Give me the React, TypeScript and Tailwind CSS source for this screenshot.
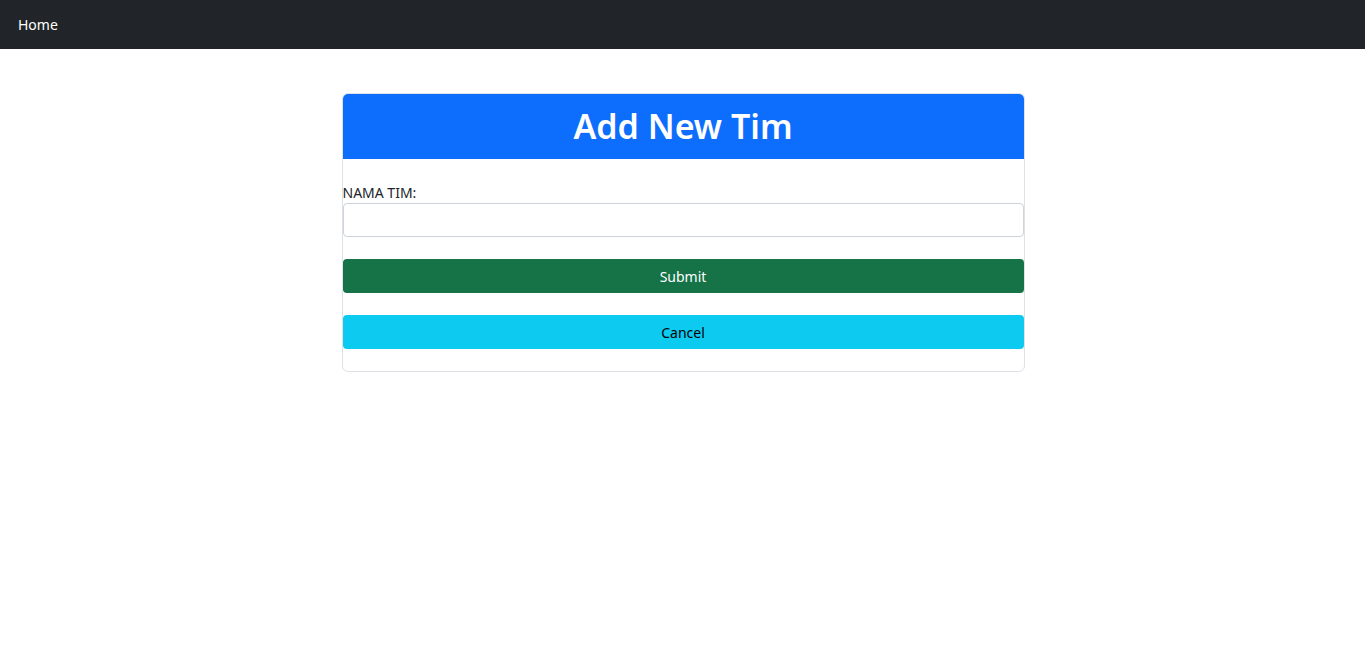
import React from 'react';

const App: React.FC = () => {
  return (
    <div className="min-h-screen bg-white text-[#212529]" style={{ fontFamily: '"Noto Sans", "Open Sans", sans-serif' }}>
      {/* Navbar */}
      <nav className="bg-[#212529] h-[49px] flex items-center px-[18px]">
        <a href="#" className="text-[14px] text-white">Home</a>
      </nav>

      {/* Form card */}
      <div className="mt-[44px] flex justify-center pl-[1px]">
        <div className="w-[683px] border border-[#dee2e6] rounded-[6px] overflow-hidden">
          <div className="bg-[#0d6efd] h-[65px] flex items-center justify-center">
            <h1 className="text-white text-[34px] font-semibold leading-none pb-[2px]">Add New Tim</h1>
          </div>
          <div className="pt-[24px] pb-[22px]">
            <label className="block text-[14px] leading-[20px]">NAMA TIM:</label>
            <input
              type="text"
              className="block w-full h-[34px] border border-[#ced4da] rounded-[4px] px-3 text-[14px] outline-none"
            />
            <button className="mt-[22px] block w-full h-[34px] bg-[#157347] text-white text-[14px] rounded-[4px]">
              Submit
            </button>
            <button className="mt-[22px] block w-full h-[34px] bg-[#0dcaf0] text-black text-[14px] rounded-[4px]">
              Cancel
            </button>
          </div>
        </div>
      </div>
    </div>
  );
};

export default App;
